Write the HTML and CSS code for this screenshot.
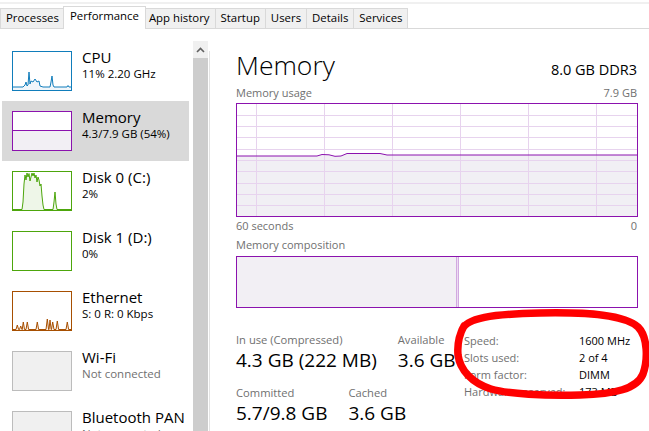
FILE: index.html
```html
<!DOCTYPE html>
<html>
<head>
<meta charset="utf-8">
<title>Task Manager - Performance</title>
<link rel="stylesheet" href="styles.css">
</head>
<body>
<div class="menubar"></div>
<nav class="tabs">
  <div class="tab">Processes</div>
  <div class="tab active">Performance</div>
  <div class="tab">App history</div>
  <div class="tab">Startup</div>
  <div class="tab">Users</div>
  <div class="tab">Details</div>
  <div class="tab">Services</div>
</nav>
<div class="content">
  <aside class="sidebar">
    <ul class="devices">
      <li class="device">
        <div class="thumb thumb-cpu">
          <svg viewBox="0 0 58 38" width="58" height="38">
            <path class="fill" d="M0 35 L10 35 L12 33 L13 30 L14 34 L15 33 L16 20 L17 32 L18 29 L20 30 L22 27 L24 30 L26 29 L27 34 L30 35 L37 35 L38 30 L39 24 L40 33 L41 35 L54 35 L55 33.5 L56 35 L58 35 L58 38 L0 38 Z"/>
            <path class="line" d="M0 35 L10 35 L12 33 L13 30 L14 34 L15 33 L16 20 L17 32 L18 29 L20 30 L22 27 L24 30 L26 29 L27 34 L30 35 L37 35 L38 30 L39 24 L40 33 L41 35 L54 35 L55 33.5 L56 35 L58 35"/>
          </svg>
        </div>
        <div class="info"><div class="name">CPU</div><div class="detail">11% 2.20 GHz</div></div>
      </li>
      <li class="device selected">
        <div class="thumb thumb-mem">
          <svg viewBox="0 0 58 38" width="58" height="38">
            <rect class="fill" x="0" y="18.5" width="58" height="20"/>
            <path class="line" d="M0 18.5 L58 18.5"/>
          </svg>
        </div>
        <div class="info"><div class="name">Memory</div><div class="detail">4.3/7.9 GB (54%)</div></div>
      </li>
      <li class="device">
        <div class="thumb thumb-disk">
          <svg viewBox="0 0 58 38" width="58" height="38">
            <path class="fill" d="M0 37.5 L9 37.5 L10 30 L11 12 L12 3 L13 8 L14 1 L15 5 L16 1.5 L17 9 L18 5 L19 1 L20 4 L21 1 L22 6 L23 3 L24 10 L25 5 L26 8 L27 14 L28 12 L29 24 L30 33 L31 37.5 L40 37.5 L41 30 L42 20 L43 32 L44 37.5 L58 37.5 L58 38 L0 38 Z"/>
            <path class="line" d="M0 37.5 L9 37.5 L10 30 L11 12 L12 3 L13 8 L14 1 L15 5 L16 1.5 L17 9 L18 5 L19 1 L20 4 L21 1 L22 6 L23 3 L24 10 L25 5 L26 8 L27 14 L28 12 L29 24 L30 33 L31 37.5 L40 37.5 L41 30 L42 20 L43 32 L44 37.5 L58 37.5"/>
          </svg>
        </div>
        <div class="info"><div class="name">Disk 0 (C:)</div><div class="detail">2%</div></div>
      </li>
      <li class="device">
        <div class="thumb thumb-disk"></div>
        <div class="info"><div class="name">Disk 1 (D:)</div><div class="detail">0%</div></div>
      </li>
      <li class="device">
        <div class="thumb thumb-net">
          <svg viewBox="0 0 58 38" width="58" height="38">
            <path class="fill" d="M0 37.5 L3 37.5 L4.3 33 L5.6 37.5 L6.5 37.5 L7.7 34 L9 37.5 L9.2 37.5 L10.3 30 L11.5 37.5 L13 37.5 L14.3 30 L15.6 37.5 L23 37.5 L24.3 30 L25.6 37.5 L33 37.5 L34.3 27 L35.6 37.5 L36 37.5 L37 28 L38.2 37.5 L38.5 37.5 L39.7 30 L41 37.5 L43 37.5 L44.3 29 L45.6 37.5 L53 37.5 L54.3 30 L55.6 37.5 L58 37.5 L58 38 L0 38 Z"/>
            <path class="line" d="M0 37.5 L3 37.5 L4.3 33 L5.6 37.5 L6.5 37.5 L7.7 34 L9 37.5 L9.2 37.5 L10.3 30 L11.5 37.5 L13 37.5 L14.3 30 L15.6 37.5 L23 37.5 L24.3 30 L25.6 37.5 L33 37.5 L34.3 27 L35.6 37.5 L36 37.5 L37 28 L38.2 37.5 L38.5 37.5 L39.7 30 L41 37.5 L43 37.5 L44.3 29 L45.6 37.5 L53 37.5 L54.3 30 L55.6 37.5 L58 37.5"/>
          </svg>
        </div>
        <div class="info"><div class="name">Ethernet</div><div class="detail">S: 0 R: 0 Kbps</div></div>
      </li>
      <li class="device">
        <div class="thumb thumb-off"></div>
        <div class="info"><div class="name">Wi-Fi</div><div class="detail muted">Not connected</div></div>
      </li>
      <li class="device">
        <div class="thumb thumb-off"></div>
        <div class="info"><div class="name">Bluetooth PAN</div><div class="detail muted">Not connected</div></div>
      </li>
    </ul>
    <div class="scrollbar">
      <div class="scroll-up">
        <svg viewBox="0 0 9 6" width="9" height="6"><polyline points="1,5 4.5,1.5 8,5" fill="none" stroke="#606060" stroke-width="1.6"/></svg>
      </div>
      <div class="scroll-thumb"></div>
    </div>
  </aside>
  <div class="divider"></div>
  <main class="panel">
    <header class="panel-header">
      <h1 class="panel-title">Memory</h1>
      <div class="panel-summary">8.0 GB DDR3</div>
    </header>
    <div class="caption"><span>Memory usage</span><span>7.9 GB</span></div>
    <div class="graph">
      <svg viewBox="0 0 400 112" width="400" height="112">
        <path class="graph-fill" d="M0 52 L80 52 L85 50.5 L92 50.8 L98 52.3 L104 52 L110 49.5 L143 49.5 L150 51 L400 51 L400 112 L0 112 Z"/>
        <g class="grid">
          <path d="M0 11.5 H400 M0 22.5 H400 M0 33.5 H400 M0 45.5 H400 M0 56.5 H400 M0 67.5 H400 M0 79.5 H400 M0 90.5 H400 M0 101.5 H400"/>
          <path d="M19.5 0 V112 M87.5 0 V112 M155.5 0 V112 M223.5 0 V112 M291.5 0 V112 M359.5 0 V112"/>
        </g>
        <path class="graph-line" d="M0 52 L80 52 L85 50.5 L92 50.8 L98 52.3 L104 52 L110 49.5 L143 49.5 L150 51 L400 51"/>
      </svg>
    </div>
    <div class="caption axis"><span>60 seconds</span><span>0</span></div>
    <div class="caption comp-caption"><span>Memory composition</span></div>
    <div class="composition">
      <div class="comp-used"></div>
      <div class="comp-modified"></div>
      <div class="comp-free"></div>
    </div>
    <section class="stats">
      <div class="stats-main">
        <div class="stat-row">
          <div class="stat"><div class="stat-label">In use (Compressed)</div><div class="stat-value">4.3 GB (222 MB)</div></div>
          <div class="stat"><div class="stat-label">Available</div><div class="stat-value">3.6 GB</div></div>
        </div>
        <div class="stat-row second">
          <div class="stat"><div class="stat-label">Committed</div><div class="stat-value">5.7/9.8 GB</div></div>
          <div class="stat"><div class="stat-label">Cached</div><div class="stat-value">3.6 GB</div></div>
        </div>
      </div>
      <dl class="specs">
        <dt>Speed:</dt><dd>1600 MHz</dd>
        <dt>Slots used:</dt><dd>2 of 4</dd>
        <dt>Form factor:</dt><dd>DIMM</dd>
        <dt>Hardware reserved:</dt><dd>173 MB</dd>
      </dl>
    </section>
  </main>
</div>
<svg class="annotation" viewBox="0 0 649 431" width="649" height="431">
  <path d="M462 330 C466 318 492 314 540 313 C590 312 625 315 638 327 C648 337 648 360 643 374 C637 389 615 394 580 395 C545 396 508 394 491 389 C472 383 460 370 458 355 C457 343 459 335 464 326" fill="none" stroke="#ff0000" stroke-width="7.5" stroke-linecap="round" stroke-linejoin="round"/>
</svg>
</body>
</html>
```

FILE: styles.css
```css
* { box-sizing: border-box; }
html, body { margin: 0; padding: 0; }
body {
  width: 649px;
  height: 431px;
  overflow: hidden;
  background: #fff;
  color: #000;
  font-family: "Open Sans", "Noto Sans", sans-serif;
  position: relative;
}

.menubar {
  height: 4px;
  border-bottom: 2px solid #f0f0f0;
}

.tabs {
  display: flex;
  align-items: flex-end;
  height: 25px;
  border-bottom: 1px solid #d9d9d9;
}
.tab {
  height: 20px;
  padding: 0 5px;
  border: 1px solid #d9d9d9;
  border-bottom: 0;
  background: #f0f0f0;
  font-size: 11.4px;
  line-height: 18px;
  margin-left: -1px;
  white-space: nowrap;
}
.tab:first-child { margin-left: 0; }
.tab.active {
  height: 23px;
  background: #fff;
  margin: 0 -2px -1px -2px;
  padding: 0 6px;
  line-height: 18px;
  position: relative;
  z-index: 1;
}

.content {
  display: flex;
  height: 402px;
}

.sidebar {
  width: 209px;
  flex: none;
  display: flex;
  padding: 12px 1px 0 0;
  overflow: hidden;
}
.devices {
  width: 193px;
  list-style: none;
  margin: 0;
  padding: 0;
}
.device {
  height: 60px;
  width: 187px;
  margin-left: 2px;
  padding: 6px 0 0 10px;
  display: flex;
  gap: 10px;
}
.device.selected { background: #d9d9d9; }

.thumb {
  width: 60px;
  height: 40px;
  margin-top: 4px;
  border: 1px solid #bcbcbc;
  background: #fff;
  flex: none;
}
.thumb svg { display: block; }
.thumb .line { fill: none; stroke-width: 1; }
.thumb-cpu { border-color: #117dbb; }
.thumb-cpu .fill { fill: #f1f6fa; }
.thumb-cpu .line { stroke: #117dbb; }
.thumb-mem { border-color: #8b12ae; }
.thumb-mem .fill { fill: #f2eff4; }
.thumb-mem .line { stroke: #8b12ae; }
.thumb-disk { border-color: #4da60c; }
.thumb-disk .fill { fill: #eef6e8; }
.thumb-disk .line { stroke: #4da60c; }
.thumb-net { border-color: #a74f01; }
.thumb-net .fill { fill: #fcf3ea; }
.thumb-net .line { stroke: #a74f01; }
.thumb-off { border-color: #bcbcbc; background: #f0f0f0; }

.info { white-space: nowrap; }
.name {
  font-size: 15px;
  line-height: 20px;
}
.detail {
  font-size: 11.5px;
  line-height: 14px;
}
.detail.muted { color: #707070; }

.scrollbar {
  width: 15px;
  display: flex;
  flex-direction: column;
}
.scroll-up {
  height: 17px;
  background: #f0f0f0;
  display: flex;
  align-items: center;
  justify-content: center;
}
.scroll-up svg { display: block; }
.scroll-thumb {
  flex: 1;
  background: #cdcdcd;
}

.divider {
  width: 1px;
  flex: none;
  margin-top: 22px;
  background: #e3e3e3;
}

.panel {
  flex: 1;
  padding: 19px 11px 0 26px;
  min-width: 0;
}
.panel-header {
  display: flex;
  justify-content: space-between;
  align-items: baseline;
  height: 34px;
}
.panel-title {
  margin: 0;
  font-size: 26.5px;
  font-weight: 300;
  line-height: 34px;
}
.panel-summary {
  font-size: 14.5px;
  padding-right: 1px;
}

.caption {
  display: flex;
  justify-content: space-between;
  font-size: 11px;
  line-height: 15px;
  color: #707070;
  margin-top: 3px;
  padding-right: 1px;
}
.graph {
  margin-top: 3px;
  height: 114px;
  border: 1px solid #8b12ae;
}
.graph svg { display: block; }
.graph-fill { fill: #f1eff4; }
.grid path { stroke: #e7d3ee; stroke-width: 1; fill: none; }
.graph-line { fill: none; stroke: #8b12ae; stroke-width: 1; }
.caption.axis { margin-top: 1px; }
.caption.comp-caption { margin-top: 4px; }

.composition {
  margin-top: 4px;
  height: 52px;
  border: 1px solid #8b12ae;
  display: flex;
}
.comp-used { width: 219px; background: #f2eff4; }
.comp-modified {
  width: 3px;
  background: #ecdcf2;
  border-left: 1px solid #d2a9e0;
  border-right: 1px solid #d2a9e0;
}
.comp-free { flex: 1; background: #fff; }

.stats {
  margin-top: 24px;
  display: flex;
  align-items: flex-start;
}
.stats-main {
  width: 228px;
  flex: none;
}
.stat-row {
  display: flex;
  gap: 21px;
}
.stat-row.second { margin-top: 13px; }
.stat { white-space: nowrap; }
.stat-label {
  font-size: 11.2px;
  line-height: 15px;
  color: #707070;
}
.stat-value {
  font-size: 19px;
  line-height: 24px;
  margin-top: 1px;
}

.specs {
  margin: 0;
  display: grid;
  grid-template-columns: 115px auto;
  align-content: start;
  font-size: 11px;
  line-height: 17px;
  white-space: nowrap;
}
.specs dt { color: #707070; }
.specs dd { margin: 0; }

.annotation {
  position: absolute;
  top: 0;
  left: 0;
  pointer-events: none;
}
```
